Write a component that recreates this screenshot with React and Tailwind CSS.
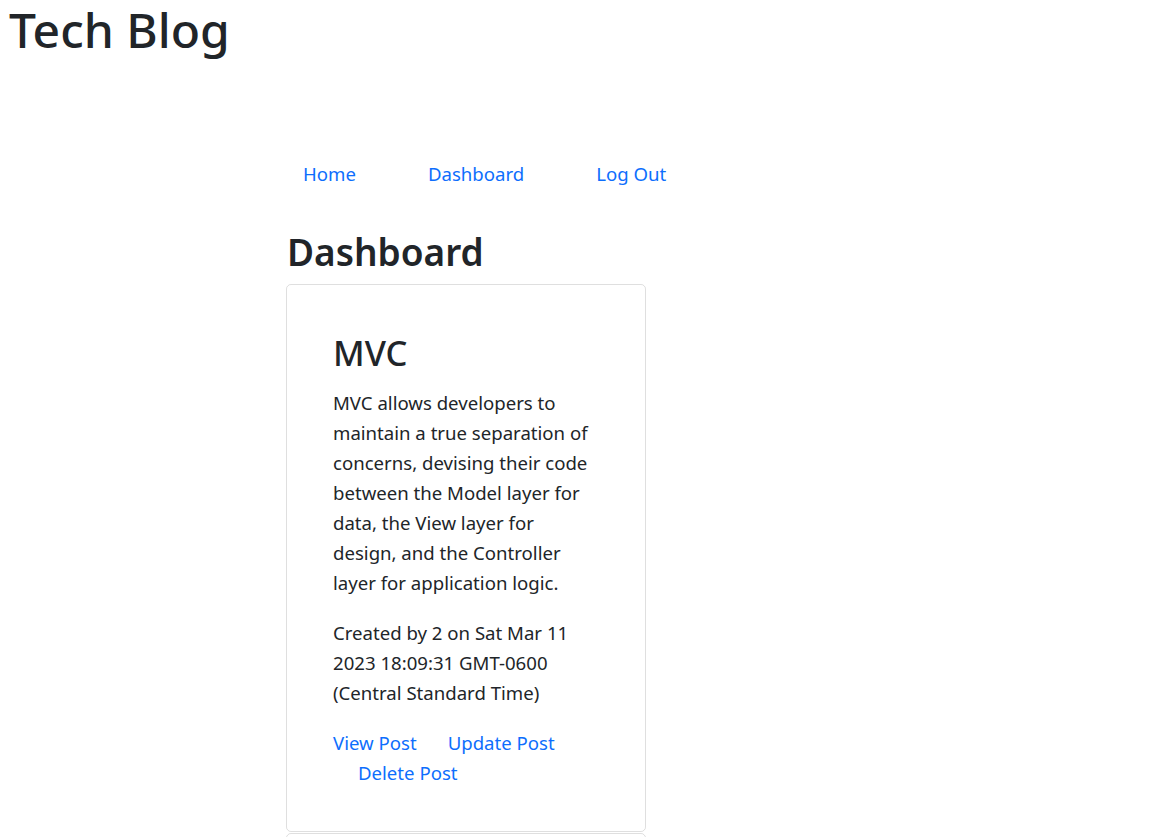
import React from 'react';

const posts = [
  {
    id: 1,
    title: 'MVC',
    body: 'MVC allows developers to maintain a true separation of concerns, devising their code between the Model layer for data, the View layer for design, and the Controller layer for application logic.',
    author: 2,
    date: 'Sat Mar 11 2023 18:09:31 GMT-0600 (Central Standard Time)',
  },
];

const App = () => {
  return (
    <div className="min-h-screen bg-white text-[#212529] font-['Noto_Sans',sans-serif]">
      {/* header */}
      <header className="pl-[9px]">
        <h1 className="text-[48px] leading-[60px] font-medium">Tech Blog</h1>
      </header>

      <main className="mx-auto w-[604px]">
        {/* nav */}
        <nav className="mt-[99px] flex gap-[72px] pl-[17px] text-[18.6px] leading-[30px] text-[#0d6efd]">
          <a href="#">Home</a>
          <a href="#">Dashboard</a>
          <a href="#">Log Out</a>
        </nav>

        <h2 className="mt-[39px] mb-[8px] pl-[1px] text-[37px] leading-[48px] font-semibold">Dashboard</h2>

        {posts.map((post) => (
          <div key={post.id} className="w-[360px] rounded-[5px] border border-black/[.125] px-[46px] pt-[46px] pb-[43px]">
            <h3 className="mb-[14px] text-[34.5px] leading-[43px] font-medium">{post.title}</h3>
            <p className="mb-[20px] text-[18.6px] leading-[30px]">{post.body}</p>
            <p className="mb-[20px] text-[18.6px] leading-[30px]">
              Created by {post.author} on {post.date}
            </p>
            <div className="text-[18.6px] leading-[30px] text-[#0d6efd]">
              <div className="flex gap-[31px]">
                <a href="#">View Post</a>
                <a href="#">Update Post</a>
              </div>
              <div className="pl-[25px]">
                <a href="#">Delete Post</a>
              </div>
            </div>
          </div>
        ))}

        {/* next card peeking in below */}
        <div className="mt-[1px] h-[40px] w-[360px] rounded-[5px] border border-black/[.125]" />
      </main>
    </div>
  );
};

export default App;
